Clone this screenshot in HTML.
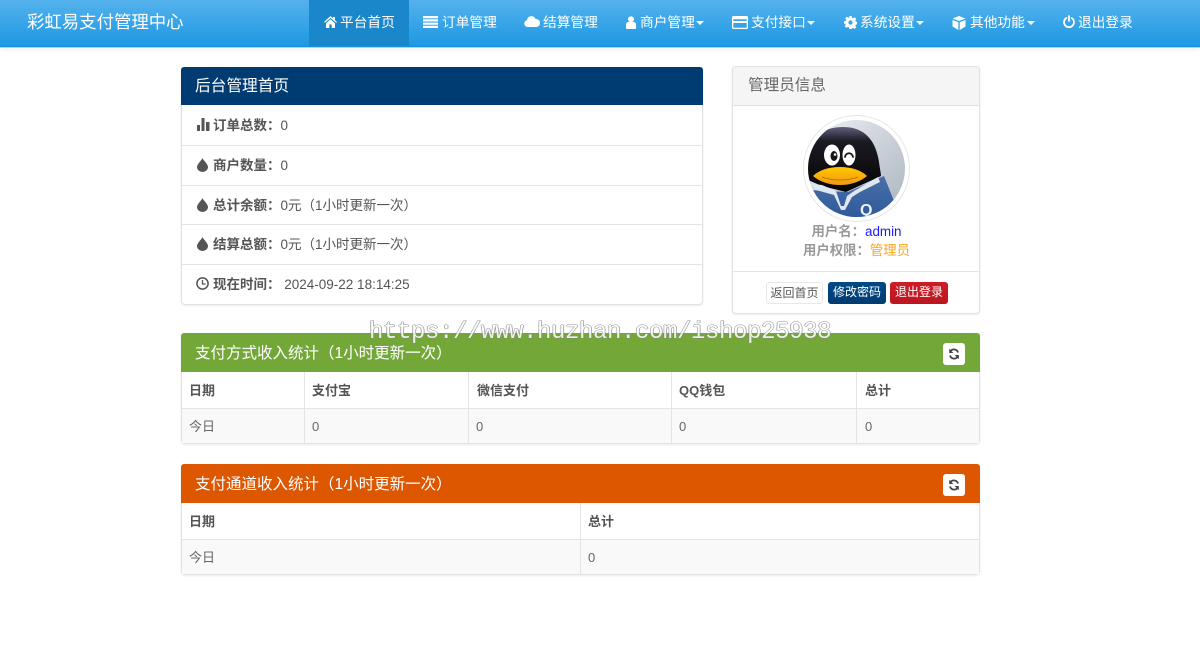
<!DOCTYPE html>
<html lang="zh">
<head>
<meta charset="utf-8">
<title>彩虹易支付管理中心</title>
<style>
*{box-sizing:border-box}
html,body{margin:0;padding:0;width:1200px;height:657px;overflow:hidden;background:#fff}
body{font-family:"Liberation Sans","Noto Sans CJK SC",sans-serif;font-size:14px;color:#555;position:relative}
.a{position:absolute;white-space:nowrap}
#nav{left:0;top:0;width:1200px;height:47px;background:linear-gradient(#54b2ec,#1e98e4);border-bottom:1px solid #1691e0;box-shadow:0 1px 0 #a9d4f0,0 3px 5px rgba(0,0,0,.05)}
#active{left:309px;top:0;width:100px;height:46px;background:#1a87cb}
.brand{left:27px;top:10px;font-size:17.4px;line-height:24px;color:#fff}
.ni{top:12px;line-height:21px;font-size:13.7px;color:#fff}
.ic{position:absolute}
.caret{position:absolute;top:21px;width:0;height:0;border-left:4px solid transparent;border-right:4px solid transparent;border-top:4px solid #fff}
.panel{position:absolute;border:1px solid #e2e2e2;border-radius:4px;background:#fff;box-shadow:0 1px 2px rgba(0,0,0,.08)}
.head{position:absolute;left:0;top:0;right:0;height:38px;border-radius:3px 3px 0 0;color:#fff;padding-left:14px;white-space:nowrap}
.row{position:absolute;left:0;right:0;height:1px;background:#e4e4e4}
.lbl{font-size:13.5px;line-height:20px;color:#555}
.lbl b{font-weight:700}
.btn{position:absolute;top:215px;height:22px;border-radius:3px;font-size:12px;line-height:21px;text-align:center}
.vl{position:absolute;width:1px;background:#e4e4e4}
.th{font-weight:700;font-size:13px;line-height:20px;color:#555}
.td{font-size:13px;line-height:20px;color:#666}
.rf{position:absolute;width:22px;height:22px;top:9px;left:761px}
#wm{left:369px;top:317px;font-family:"Liberation Mono",monospace;font-size:24px;line-height:32px;color:#fff;letter-spacing:-.4px;text-shadow:-.7px 0 0 #808080,.7px 0 0 #808080,0 -.7px 0 #808080,0 .7px 0 #808080;z-index:9;opacity:.85}
</style>
</head>
<body>
<div id="nav" class="a"></div>
<div id="active" class="a"></div>
<div class="a brand">彩虹易支付管理中心</div>

<svg class="ic" style="left:324px;top:16px" width="13" height="12" viewBox="0 0 13 12"><path fill="#fff" d="M6.500 0 0 6l.8.8L6.500 2l5.700 4.800.8-.8-2-1.900V1H9v1.400zM2 7.200V12h3.300V8.500h2.400V12H11V7.200L6.500 3.300z"/></svg>
<div class="a ni" style="left:340px">平台首页</div>

<svg class="ic" style="left:423px;top:16px" width="15" height="12" viewBox="0 0 15 12"><path fill="#fff" d="M0 0h15v2.200H0zM0 3.300h15v2.200H0zM0 6.600h15v2.200H0zM0 9.800h15V12H0z"/></svg>
<div class="a ni" style="left:442px">订单管理</div>

<svg class="ic" style="left:524px;top:16px" width="16" height="11" viewBox="0 0 16 11"><path fill="#fff" d="M3.500 11A3.500 3.500 0 0 1 3 4.100 4.500 4.500 0 0 1 11.600 3 4 4 0 0 1 12.500 11z"/></svg>
<div class="a ni" style="left:543px">结算管理</div>

<svg class="ic" style="left:626px;top:16px" width="10" height="13" viewBox="0 0 10 13"><circle cx="5" cy="3.200" r="3" fill="#fff"/><path fill="#fff" d="M0 12V8.500C0 6.800 1.400 6 2.500 6h5C8.600 6 10 6.800 10 8.500V12a1 1 0 0 1-1 1H1a1 1 0 0 1-1-1z"/></svg>
<div class="a ni" style="left:640px">商户管理</div><div class="caret" style="left:696px"></div>

<svg class="ic" style="left:732px;top:16px" width="16" height="13" viewBox="0 0 16 13"><path fill="#fff" fill-rule="evenodd" d="M1.500 0h13A1.500 1.500 0 0 1 16 1.500v10a1.500 1.500 0 0 1-1.500 1.500h-13A1.500 1.500 0 0 1 0 11.500v-10A1.500 1.500 0 0 1 1.500 0zM1.300 3.200v1.800h13.400V3.200zM1.300 7v4.700h13.400V7z"/></svg>
<div class="a ni" style="left:751px">支付接口</div><div class="caret" style="left:807px"></div>

<svg class="ic" style="left:844px;top:16px" width="13" height="13" viewBox="0 0 13 13"><path fill="#fff" fill-rule="evenodd" d="M5.300 0h2.400l.3 1.800 1.100.5 1.500-1 1.700 1.700-1 1.500.5 1.100 1.700.3v2.400l-1.700.3-.5 1.100 1 1.500-1.700 1.700-1.500-1-1.100.5-.3 1.700H5.300L5 11.400l-1.100-.5-1.500 1-1.700-1.700 1-1.500-.5-1.100L0 7.700V5.300l1.700-.3.5-1.100-1-1.500L2.900.7l1.500 1 1.100-.5zM6.500 4.400a2.100 2.100 0 1 0 0 4.200 2.100 2.100 0 0 0 0-4.200z"/></svg>
<div class="a ni" style="left:860px">系统设置</div><div class="caret" style="left:916px"></div>

<svg class="ic" style="left:952px;top:16px" width="14" height="14" viewBox="0 0 14 14"><path fill="#fff" d="M7 0l6.500 2.500L7 5 .5 2.500zM.5 4v6.500L6.300 14V6.300zM7.700 6.300V14l5.800-3.500V4z"/></svg>
<div class="a ni" style="left:970px">其他功能</div><div class="caret" style="left:1027px"></div>

<svg class="ic" style="left:1063px;top:15px" width="12" height="13" viewBox="0 0 12 13"><path fill="none" stroke="#fff" stroke-width="1.800" stroke-linecap="round" d="M3.300 3A5 5 0 1 0 8.700 3"/><path fill="none" stroke="#fff" stroke-width="1.800" stroke-linecap="round" d="M6 1v5"/></svg>
<div class="a ni" style="left:1078px">退出登录</div>

<!-- main panel -->
<div class="panel" style="left:181px;top:67px;width:522px;height:238px">
  <div class="head" style="background:#003b72;left:-1px;right:-1px;top:-1px;height:38px;padding-left:14px;font-size:15.7px;line-height:39px">后台管理首页</div>
  <div class="row" style="top:77px"></div>
  <div class="row" style="top:117px"></div>
  <div class="row" style="top:156px"></div>
  <div class="row" style="top:196px"></div>

  <svg class="ic" style="left:15px;top:50px" width="13" height="13" viewBox="0 0 13 13"><path fill="#555" d="M0 7h3v6H0zM4.500 0h3v13h-3zM9 4h3.500v9H9z"/></svg>
  <div class="a lbl" style="left:31px;top:48px"><b>订单总数：</b>0</div>

  <svg class="ic" style="left:15px;top:90px" width="11" height="14" viewBox="0 0 11 14"><path fill="#555" d="M5.500 0C5 2 0 6 0 9a5.500 5 0 0 0 11 0C11 6 6 2 5.500 0z"/></svg>
  <div class="a lbl" style="left:31px;top:88px"><b>商户数量：</b>0</div>

  <svg class="ic" style="left:15px;top:130px" width="11" height="14" viewBox="0 0 11 14"><path fill="#555" d="M5.500 0C5 2 0 6 0 9a5.500 5 0 0 0 11 0C11 6 6 2 5.500 0z"/></svg>
  <div class="a lbl" style="left:31px;top:128px"><b>总计余额：</b>0元（1小时更新一次）</div>

  <svg class="ic" style="left:15px;top:169px" width="11" height="14" viewBox="0 0 11 14"><path fill="#555" d="M5.500 0C5 2 0 6 0 9a5.500 5 0 0 0 11 0C11 6 6 2 5.500 0z"/></svg>
  <div class="a lbl" style="left:31px;top:167px"><b>结算总额：</b>0元（1小时更新一次）</div>

  <svg class="ic" style="left:14px;top:209px" width="13" height="13" viewBox="0 0 13 13"><circle cx="6.500" cy="6.500" r="5.600" fill="none" stroke="#555" stroke-width="1.500"/><path fill="none" stroke="#555" stroke-width="1.300" d="M6.500 3v4H9.500"/></svg>
  <div class="a lbl" style="left:31px;top:207px"><b>现在时间：</b>&nbsp;2024-09-22 18:14:25</div>
</div>

<!-- admin panel -->
<div class="panel" style="left:732px;top:66px;width:248px;height:248px">
  <div class="a" style="left:0;top:0;width:246px;height:39px;background:#f5f5f5;border-bottom:1px solid #e2e2e2;border-radius:3px 3px 0 0;font-size:15.6px;line-height:38px;color:#666;padding-left:15px">管理员信息</div>

  <div class="a" style="left:70px;top:48px;width:107px;height:107px;border-radius:50%;border:1px solid #e6e6e6;background:#fff"></div>
  <svg class="ic" style="left:75px;top:53px" width="97" height="97" viewBox="0 0 97 97">
    <defs>
      <clipPath id="cp"><circle cx="48.500" cy="48.500" r="48.500"/></clipPath>
      <linearGradient id="bgg" x1="0" y1="0" x2="1" y2="1"><stop offset="0" stop-color="#eef0f5"/><stop offset="1" stop-color="#a9b3bf"/></linearGradient>
      <linearGradient id="bk" x1="0" y1="0" x2="0" y2="1"><stop offset="0" stop-color="#5f5f7c"/><stop offset=".22" stop-color="#1a1a22"/><stop offset="1" stop-color="#050505"/></linearGradient>
      <linearGradient id="bk2" x1="0" y1="0" x2="0" y2="1"><stop offset="0" stop-color="#ffc600"/><stop offset="1" stop-color="#f39a10"/></linearGradient>
      <linearGradient id="sh" x1="0" y1="0" x2="0" y2="1"><stop offset="0" stop-color="#4a6fa8"/><stop offset="1" stop-color="#2f5a9a"/></linearGradient>
    </defs>
    <g clip-path="url(#cp)">
      <rect width="97" height="97" fill="url(#bgg)"/>
      <path fill="url(#sh)" d="M0 70 40 72 76 56 84 76 92 97H0z"/>
      <path fill="url(#bk)" d="M0 45C0 20 12 7 35 7 58 7 68 22 71 42 72 50 73 53 73 56L38 72 14 66 0 60z"/>
      <path fill="#dfe7f0" d="M4 64 14 65 28 71 33 86 36 86 39 76 46 71 70 57 72 62 52 72 44 77 37 90 33 90 26 75 8 70z"/>
      <ellipse cx="24" cy="35" rx="8" ry="10.500" fill="#fff"/>
      <ellipse cx="26" cy="36" rx="3.500" ry="5" fill="#151515"/>
      <circle cx="27" cy="34.500" r="1.300" fill="#fff"/>
      <ellipse cx="41" cy="35" rx="6.500" ry="10.500" fill="#fff"/>
      <path fill="none" stroke="#151515" stroke-width="1.800" stroke-linecap="round" d="M37 37c1-5 7-5 8 0"/>
      <path fill="url(#bk2)" d="M5 56C11 50 21 47 32 47 43 47 53 50 59 56 52 62 42 65 32 65 22 65 12 62 5 56z"/>
      <path fill="none" stroke="#a86c00" stroke-width=".8" d="M14 57c10 4 26 4 36 0"/>
      <text x="52" y="95" font-family="Liberation Sans" font-size="16" font-weight="700" fill="#eef2f7">Q</text>
    </g>
  </svg>

  <div class="a" style="left:0;width:246px;top:155px;padding-left:1px;text-align:center;font-size:13.4px;line-height:20px;color:#999"><b>用户名：</b><span style="color:#1a1aff">admin</span></div>
  <div class="a" style="left:0;width:246px;top:174px;padding-left:1px;text-align:center;font-size:13.4px;line-height:20px;color:#999"><b>用户权限：</b><span style="color:#f9a51a">管理员</span></div>
  <div class="row" style="top:204px"></div>

  <div class="btn" style="left:33px;width:57px;background:#fff;border:1px solid #e8e8e8;color:#555">返回首页</div>
  <div class="btn" style="left:95px;width:58px;background:linear-gradient(#004a86,#003b72);color:#fff">修改密码</div>
  <div class="btn" style="left:157px;width:58px;background:linear-gradient(#cf1d26,#bb1620);color:#fff">退出登录</div>
</div>

<!-- table one -->
<div class="panel" style="left:181px;top:333px;width:799px;height:111px">
  <div class="head" style="background:#73a839;left:-1px;right:-1px;top:-1px;height:39px;padding-left:14px;font-size:15.5px;line-height:41px">支付方式收入统计（1小时更新一次）</div>
  <svg class="rf" viewBox="0 0 22 22"><rect width="22" height="22" rx="3" fill="#fff"/><path fill="none" stroke="#444" stroke-width="1.800" d="M15 9.500a4.300 4.300 0 0 0-7.500-1.500M7 12.500a4.300 4.300 0 0 0 7.500 1.500"/><path fill="#444" d="M6.200 5.800v4.200h4.200zM15.800 16.200v-4.200h-4.200z"/></svg>
  <div class="a" style="left:0;top:74px;width:797px;height:35px;background:#f9f9f9"></div>
  <div class="row" style="top:74px"></div>
  <div class="vl" style="left:122px;top:38px;height:71px"></div>
  <div class="vl" style="left:286px;top:38px;height:71px"></div>
  <div class="vl" style="left:489px;top:38px;height:71px"></div>
  <div class="vl" style="left:674px;top:38px;height:71px"></div>
  <div class="a th" style="left:7px;top:47px">日期</div>
  <div class="a th" style="left:130px;top:47px">支付宝</div>
  <div class="a th" style="left:295px;top:47px">微信支付</div>
  <div class="a th" style="left:497px;top:47px">QQ钱包</div>
  <div class="a th" style="left:683px;top:47px">总计</div>
  <div class="a td" style="left:7px;top:83px">今日</div>
  <div class="a td" style="left:130px;top:83px">0</div>
  <div class="a td" style="left:294px;top:83px">0</div>
  <div class="a td" style="left:497px;top:83px">0</div>
  <div class="a td" style="left:683px;top:83px">0</div>
</div>

<!-- table two -->
<div class="panel" style="left:181px;top:464px;width:799px;height:111px">
  <div class="head" style="background:#dd5600;left:-1px;right:-1px;top:-1px;height:39px;padding-left:14px;font-size:15.5px;line-height:41px">支付通道收入统计（1小时更新一次）</div>
  <svg class="rf" viewBox="0 0 22 22"><rect width="22" height="22" rx="3" fill="#fff"/><path fill="none" stroke="#444" stroke-width="1.800" d="M15 9.500a4.300 4.300 0 0 0-7.500-1.500M7 12.500a4.300 4.300 0 0 0 7.500 1.500"/><path fill="#444" d="M6.200 5.800v4.200h4.200zM15.800 16.200v-4.200h-4.200z"/></svg>
  <div class="a" style="left:0;top:74px;width:797px;height:35px;background:#f9f9f9"></div>
  <div class="row" style="top:74px"></div>
  <div class="vl" style="left:398px;top:38px;height:71px"></div>
  <div class="a th" style="left:7px;top:47px">日期</div>
  <div class="a th" style="left:406px;top:47px">总计</div>
  <div class="a td" style="left:7px;top:83px">今日</div>
  <div class="a td" style="left:406px;top:83px">0</div>
</div>

<div id="wm" class="a">https://www.huzhan.com/ishop25938</div>
</body>
</html>
